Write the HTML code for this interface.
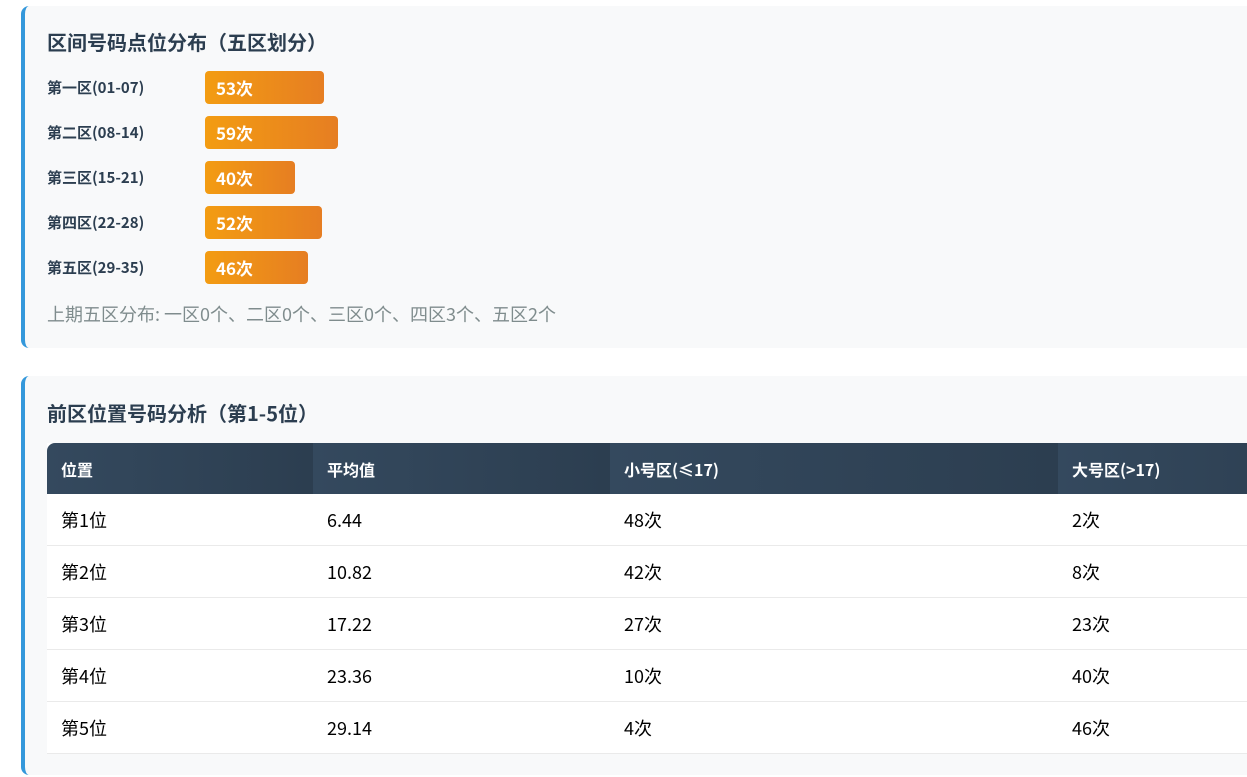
<!DOCTYPE html>
<html><head><meta charset="utf-8"><style>
html,body{margin:0;padding:0;width:1247px;height:777px;overflow:hidden;background:#fff;font-family:"Noto Sans CJK SC","Liberation Sans",sans-serif;}
.card{position:absolute;left:21px;width:1300px;background:#f8f9fa;border-left:4px solid #3498db;border-radius:8px;box-sizing:border-box;}
h3{margin:0;position:absolute;left:22px;font-size:20px;font-weight:bold;color:#2c3e50;line-height:26px;}
.row{position:absolute;left:22px;height:33px;width:600px;}
.lab{position:absolute;left:0;top:0;line-height:33px;font-size:15px;font-weight:bold;color:#2c3e50;}
.bar{position:absolute;left:158px;top:0;height:33px;border-radius:4px;background:linear-gradient(90deg,#f39c12,#e67e22);color:#fff;font-weight:bold;font-size:17px;line-height:33px;padding-left:11px;box-sizing:border-box;}
.foot{position:absolute;left:22px;top:297px;font-size:18px;color:#7f8c8d;line-height:22px;}
table{position:absolute;left:22px;top:67px;border-collapse:collapse;width:1300px;background:#fff;}
th{height:51px;text-align:left;padding:0 0 0 14px;color:#fff;font-size:16px;font-weight:bold;background:linear-gradient(90deg,#34495e,#2c3e50);vertical-align:middle;}
td{height:51px;padding:0 0 0 14px;font-size:18px;color:#000;border-bottom:1px solid #eaeaea;vertical-align:middle;line-height:24px;}
</style></head><body>
<div class="card" style="top:6px;height:342px;">
<h3 style="top:23px;">区间号码点位分布（五区划分）</h3>
<div class="row" style="top:65px"><span class="lab">第一区(01-07)</span><div class="bar" style="width:119px">53次</div></div>
<div class="row" style="top:110px"><span class="lab">第二区(08-14)</span><div class="bar" style="width:133px">59次</div></div>
<div class="row" style="top:155px"><span class="lab">第三区(15-21)</span><div class="bar" style="width:90px">40次</div></div>
<div class="row" style="top:200px"><span class="lab">第四区(22-28)</span><div class="bar" style="width:117px">52次</div></div>
<div class="row" style="top:245px"><span class="lab">第五区(29-35)</span><div class="bar" style="width:103px">46次</div></div>
<div class="foot">上期五区分布: 一区0个、二区0个、三区0个、四区3个、五区2个</div>
</div>
<div class="card" style="top:376px;height:399px;">
<h3 style="top:24px;">前区位置号码分析（第1-5位）</h3>
<table>
<tr><th style="width:252px;border-top-left-radius:8px">位置</th><th style="width:283px">平均值</th><th style="width:434px">小号区(≤17)</th><th>大号区(&gt;17)</th></tr>
<tr><td>第1位</td><td>6.44</td><td>48次</td><td>2次</td></tr>
<tr><td>第2位</td><td>10.82</td><td>42次</td><td>8次</td></tr>
<tr><td>第3位</td><td>17.22</td><td>27次</td><td>23次</td></tr>
<tr><td>第4位</td><td>23.36</td><td>10次</td><td>40次</td></tr>
<tr><td>第5位</td><td>29.14</td><td>4次</td><td>46次</td></tr>
</table>
</div>
</body></html>
